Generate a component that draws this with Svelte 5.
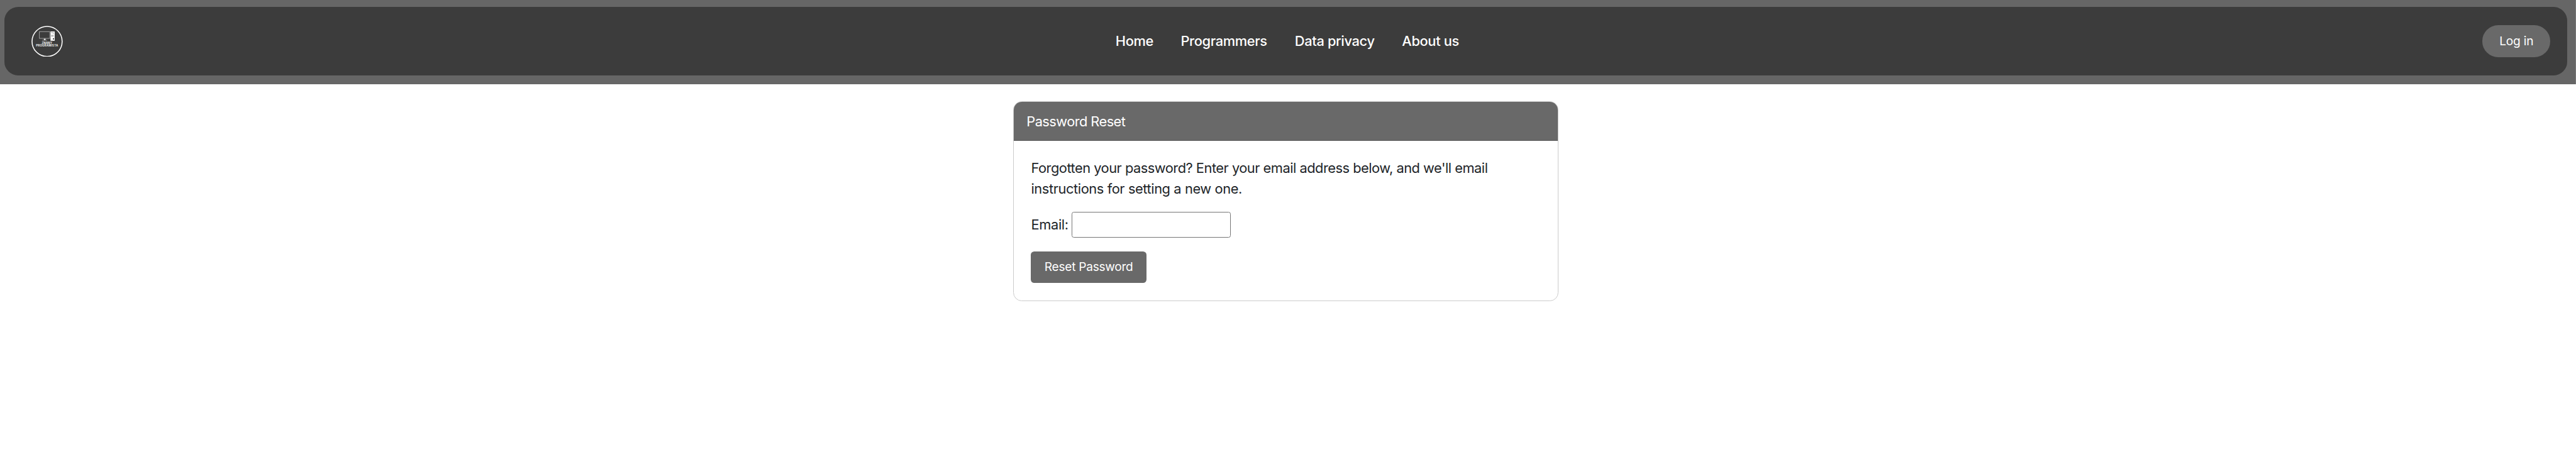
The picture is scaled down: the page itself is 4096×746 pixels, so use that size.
<script>
  const links = ['Home', 'Programmers', 'Data privacy', 'About us'];
  let email = $state('');
</script>

<header>
  <div class="bar">
    <a class="logo" href="#home" aria-label="Znany Programista">
      <svg viewBox="0 0 73 73">
        <circle cx="36.5" cy="36.5" r="35.1" fill="none" stroke="#fff" stroke-width="2.3" />
        <rect x="18.6" y="13.6" width="24" height="15.8" fill="none" stroke="#b4b4b4" stroke-width="1.2" />
        <path d="M29 30h4v3.2h3.6v1H24.8v-1H29z" fill="#e0e0e0" />
        <rect x="44.4" y="13.2" width="9.8" height="21.8" fill="#fff" />
        <path d="M46 15.8h6.4M46 22.3h6M46 24.4h6" stroke="#777" stroke-width="1" />
        <rect x="50" y="17.7" width="1.6" height="1.5" fill="#888" />
        <rect x="50" y="29" width="2.8" height="3" fill="#3c3c3c" />
        <text x="36.3" y="42.3" textLength="24">ZNANY</text>
        <text x="36.3" y="49" textLength="51.5">PROGRAMISTA</text>
      </svg>
    </a>
    <nav>
      {#each links as link}<a href="#top">{link}</a>{/each}
    </nav>
    <a class="login" href="#login">Log in</a>
  </div>
</header>

<main>
  <section class="card">
    <h1>Password Reset</h1>
    <form onsubmit={(e) => e.preventDefault()}>
      <p>
        <span class="first">Forgotten your password? Enter your email address below, and we'll email</span>
        <span class="second">instructions for setting a new one.</span>
      </p>
      <div class="field">
        <label for="email">Email:</label>
        <input id="email" type="email" bind:value={email} />
      </div>
      <button type="submit">Reset Password</button>
    </form>
  </section>
</main>

<style>
  :global(html) {
    font-size: 6.81984px;
  }
  :global(body) {
    margin: 0;
    background: #fff;
    overflow: hidden;
  }
  :global(#app) {
    font-family: Inter, 'Liberation Sans', sans-serif;
    font-size: 3.2rem;
    line-height: 1.5;
    color: #212529;
  }
  header {
    box-sizing: border-box;
    height: 19.6rem;
    padding: 1.6rem calc(2rem - 1px) 2rem 1rem;
    background: #666;
    border-right: 1px solid #7a7a7a;
  }
  .bar {
    box-sizing: border-box;
    height: 16rem;
    padding: 0 4rem 0 6.4rem;
    border-radius: 3.2rem;
    background: #3c3c3c;
    display: flex;
    align-items: center;
  }
  a {
    color: #fff;
    text-decoration: none;
    white-space: nowrap;
  }
  .logo {
    width: 7.3rem;
    height: 7.3rem;
    flex: none;
  }
  .logo svg {
    display: block;
    width: 100%;
    height: 100%;
  }
  .logo text {
    font: 700 6.4px Inter, sans-serif;
    fill: #f2f2f2;
    text-anchor: middle;
  }
  nav {
    display: grid;
    grid-template-columns: 8.8rem 20.2rem 18.6rem 13.4rem;
    column-gap: 6.4rem;
    margin-left: 245.4rem;
    padding-top: 0.1rem;
    font-weight: 500;
    letter-spacing: -0.053rem;
  }
  .login {
    box-sizing: border-box;
    width: 15.8rem;
    height: 7.4rem;
    padding-top: 0.15rem;
    margin-left: auto;
    border-radius: 3.7rem;
    background: #696969;
    display: flex;
    align-items: center;
    justify-content: center;
    font-size: 2.8rem;
    letter-spacing: -0.028rem;
  }
  main {
    padding-top: 4.05rem;
    padding-left: 236.2rem;
  }
  .card {
    box-sizing: border-box;
    width: 127.2rem;
    height: 46.6rem;
    border: 0.2rem solid #cbcbcb;
    border-radius: 2rem;
    overflow: hidden;
  }
  h1 {
    box-sizing: border-box;
    height: 9.05rem;
    margin: 0;
    padding: 2.1rem 3rem 0;
    border-bottom: 0.2rem solid #555;
    background: #696969;
    color: #fff;
    font-size: 3.2rem;
    font-weight: 400;
    letter-spacing: -0.082rem;
  }
  form {
    padding: 4rem 4.05rem;
  }
  p {
    margin: 0 0 3rem;
  }
  p span {
    display: block;
    white-space: nowrap;
  }
  .first {
    letter-spacing: -0.072rem;
  }
  .second {
    letter-spacing: -0.059rem;
  }
  .field {
    display: flex;
    align-items: center;
    height: 6rem;
    margin-bottom: 3.2rem;
  }
  label {
    width: 9.5rem;
    letter-spacing: -0.05rem;
  }
  input {
    box-sizing: border-box;
    width: 37rem;
    height: 6rem;
    margin: 0;
    padding: 0.2rem 0.4rem;
    border: 0.2rem solid #767676;
    border-radius: 0.5rem;
    background: #fff;
    font: inherit;
    outline: none;
  }
  button {
    display: block;
    width: 26.9rem;
    height: 7.4rem;
    padding: 0.15rem 0 0;
    border: 0;
    border-radius: 0.8rem;
    background: #696969;
    color: #fff;
    font: 400 2.8rem/1.5 Inter, sans-serif;
    letter-spacing: -0.037rem;
  }
</style>
